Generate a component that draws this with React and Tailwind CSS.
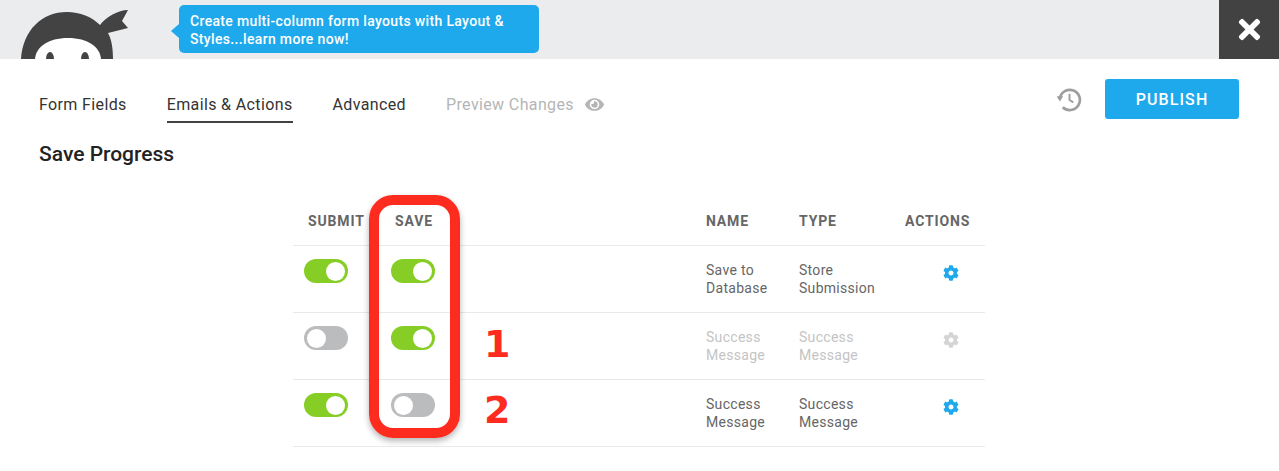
import React from "react";
import { FaCog, FaEye, FaTimes } from "react-icons/fa";

const rows = [
  { submit: true, save: true, name: ["Save to", "Database"], type: ["Store", "Submission"], active: true },
  { submit: false, save: true, name: ["Success", "Message"], type: ["Success", "Message"], active: false },
  { submit: true, save: false, name: ["Success", "Message"], type: ["Success", "Message"], active: true },
];

const Toggle = ({ on }) => (
  <div className={`w-11 h-6 rounded-full flex items-center px-[3px] ${on ? "bg-[#86ce26] justify-end" : "bg-[#bbbcbe] justify-start"}`}>
    <div className="w-[19px] h-[19px] rounded-full bg-white" />
  </div>
);

const Logo = () => (
  <svg className="absolute left-0 top-0" width="140" height="59" viewBox="0 0 140 59">
    <path d="M21 59 C23 30 42 12 67 12 C80 12 92 17 100 25 C106 17 118 10 128 10 L122 21 L128 28 L108 33 C112 40 113 50 113 59 Z" fill="#434343" />
    <path d="M35 59 C36 47 48 38 68 38 C88 38 100 47 101 59 Z" fill="#fff" />
    <ellipse cx="50" cy="59" rx="4" ry="7" fill="#434343" />
    <ellipse cx="85" cy="59" rx="4" ry="7" fill="#434343" />
  </svg>
);

const HistoryIcon = () => (
  <svg width="25" height="25" viewBox="0 0 26 26" fill="none" stroke="#9e9e9e">
    <path d="M3 11.5 A10.5 10.5 0 1 1 6 21" strokeWidth="2.8" />
    <path d="M13 7 V13.5 L17 16" strokeWidth="2" />
    <polygon points="-0.5,9.5 6.5,9.5 3,15" fill="#9e9e9e" stroke="none" />
  </svg>
);

const Tab = ({ children, active, muted }) => (
  <div className={`h-[35px] pt-[5px] leading-[24px] text-[16px] tracking-[0.37px] border-b-2 ${active ? "border-[#424242]" : "border-transparent"} ${muted ? "text-[#b5b5b5]" : "text-[#333333]"}`}>
    {children}
  </div>
);

const Cell = ({ lines, muted }) => (
  <div className={`pl-[11px] pt-[15px] text-[14px] leading-[18px] tracking-[0.3px] ${muted ? "text-[#c4c4c4]" : "text-[#666666]"}`}>
    {lines.map((line) => (
      <div key={line}>{line}</div>
    ))}
  </div>
);

const Head = ({ children, className }) => (
  <div className={`text-[14px] font-bold tracking-[0.85px] text-[#666666] ${className}`}>{children}</div>
);

export default function App() {
  return (
    <div className="relative w-[1279px] h-[471px] overflow-hidden bg-white font-['Roboto',sans-serif]">
      {/* top banner */}
      <div className="relative h-[59px] bg-[#ebecee] flex justify-end">
        <Logo />
        <div className="absolute left-[179px] top-[5px] w-[360px] h-[48px] rounded-[5px] bg-[#1ea9ec] pl-[11px] pt-[7px] text-[14px] leading-[18px] tracking-[0.34px] font-medium text-white">
          <div className="absolute left-[-8px] top-[19px] w-0 h-0 border-y-[7px] border-y-transparent border-r-[8px] border-r-[#1ea9ec]" />
          Create multi-column form layouts with Layout &amp;
          <br />
          Styles...learn more now!
        </div>
        <div className="w-[60px] bg-[#424242] flex items-center justify-center text-white">
          <FaTimes size={31} />
        </div>
      </div>

      {/* nav */}
      <div className="flex items-start justify-between pl-[39px] pr-[40px] pt-[20px]">
        <div className="flex gap-10 mt-[9px]">
          <Tab>Form Fields</Tab>
          <Tab active>Emails &amp; Actions</Tab>
          <Tab>Advanced</Tab>
          <div className="flex gap-[11px]">
            <Tab muted>Preview Changes</Tab>
            <FaEye size={19} className="mt-[7px] text-[#b5b5b5]" />
          </div>
        </div>
        <div className="flex items-center gap-[23px]">
          <HistoryIcon />
          <button className="w-[134px] h-10 pt-[1px] rounded-[3px] bg-[#1ea9ec] text-white text-[16px] font-medium tracking-[1.1px]">
            PUBLISH
          </button>
        </div>
      </div>

      <h2 className="pl-[39px] mt-[17px] text-[21px] leading-[28px] font-medium text-[#222222]">Save Progress</h2>

      {/* table */}
      <div className="ml-[293px] mt-[31px] w-[692px]">
        <div className="grid grid-cols-[87px_315px_93px_106px_91px] h-[47px] items-center border-b border-[#e9e9e9] pb-[2px]">
          <Head className="pl-[15px]">SUBMIT</Head>
          <Head className="pl-[15px]">SAVE</Head>
          <Head className="pl-[11px]">NAME</Head>
          <Head className="pl-[11px]">TYPE</Head>
          <Head className="pl-[11px]">ACTIONS</Head>
        </div>
        {rows.map((row, i) => (
          <div key={i} className="grid grid-cols-[87px_315px_93px_106px_91px] h-[67px] border-b border-[#e9e9e9]">
            <div className="pl-[11px] pt-[13px]">
              <Toggle on={row.submit} />
            </div>
            <div className="pl-[11px] pt-[13px]">
              <Toggle on={row.save} />
            </div>
            <Cell lines={row.name} muted={!row.active} />
            <Cell lines={row.type} muted={!row.active} />
            <div className="pl-[49px] pt-[19px]">
              <FaCog size={16} className={row.active ? "text-[#1ea9ec]" : "text-[#d4d4d4]"} />
            </div>
          </div>
        ))}
      </div>

      {/* annotations */}
      <div className="absolute left-[369px] top-[195px] w-[91px] h-[243px] rounded-[24px] border-[10px] border-[#fe2c1f] shadow-[0_3px_6px_rgba(0,0,0,0.3)]" />
      <div className="absolute left-[484px] top-[321px] text-[38px] leading-[46px] font-bold font-['DejaVu_Sans',sans-serif] text-[#fe2c1f]">1</div>
      <div className="absolute left-[484px] top-[387px] text-[38px] leading-[46px] font-bold font-['DejaVu_Sans',sans-serif] text-[#fe2c1f]">2</div>
    </div>
  );
}
